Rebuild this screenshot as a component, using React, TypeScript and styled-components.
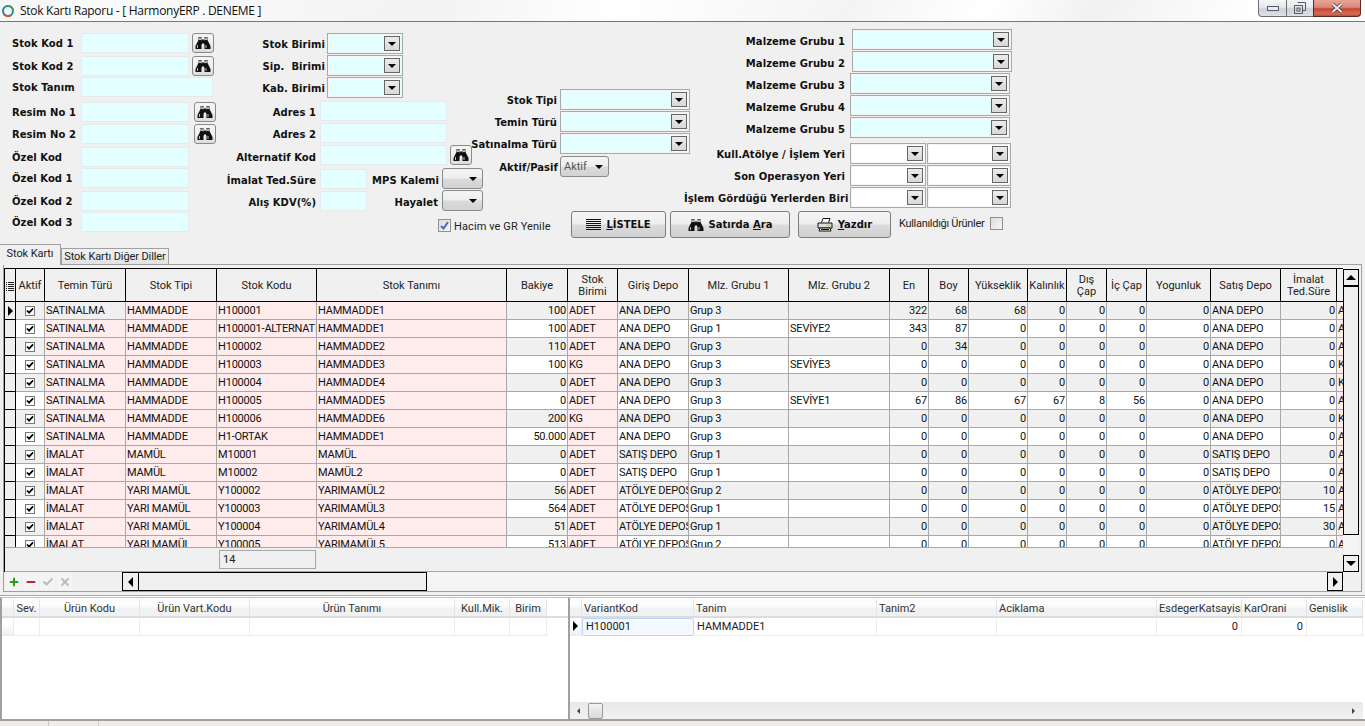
import React from 'react';
import styled, { createGlobalStyle } from 'styled-components';
import { Plus, Minus, Check, X } from 'lucide-react';

const Global = createGlobalStyle`
  html, body { margin: 0; padding: 0; background: #f0f0f0; overflow: hidden; }
  * { box-sizing: border-box; }
  body { font-family: Roboto, "Liberation Sans", sans-serif; font-size: 11px; color: #000; }
`;

const Window = styled.div`
  width: 1365px; height: 726px; display: flex; flex-direction: column; overflow: hidden; background: #f0f0f0;
`;
const TitleBar = styled.header`
  height: 22px; flex: none; display: flex; align-items: flex-start; justify-content: space-between;
  border-bottom: 1px solid #777;
  background: linear-gradient(115deg, #f6f6f6 0%, #fafafa 8%, #f3f3f3 32%, #fff 45%, #f4f4f4 62%, #fff 72%, #f1f1f1 80%, #fff 92%, #fbfbfb 100%);
`;
const TitleLeft = styled.div`
  display: flex; align-items: center; height: 21px; padding-left: 1px; gap: 5px;
  font-family: "Open Sans", "Noto Sans", sans-serif; font-size: 12px; letter-spacing: -0.28px; color: #111;
`;
const WinButtons = styled.div`display: flex; margin-right: 4px;`;
const WinBtn = styled.div<{ $w: number; $close?: boolean; $pos?: string }>`
  width: ${p => p.$w}px; height: 17px; display: flex; align-items: center; justify-content: center;
  border: 1px solid ${p => (p.$close ? '#5a2a26' : '#6b6f76')}; border-top: none; margin-left: -1px;
  border-radius: ${p => p.$pos === 'l' ? '0 0 0 4px' : p.$pos === 'r' ? '0 0 4px 0' : '0'};
  background: ${p => p.$close
    ? 'linear-gradient(#e8a496 0%, #d98a7c 45%, #c8452d 55%, #d96a50 85%, #a8524a 100%)'
    : 'linear-gradient(#f6f6f6 0%, #e6e8ec 45%, #ced1d6 55%, #dfe1e5 100%)'};
`;

const Form = styled.section`
  height: 222px; flex: none; display: flex; padding-left: 12px;
`;
const Column = styled.div<{ $w: number; $top: number }>`
  width: ${p => p.$w}px; padding-top: ${p => p.$top}px; display: flex; flex-direction: column; flex: none;
`;
const Row = styled.div<{ $gap?: number; $h?: number; $pad?: number }>`
  display: flex; align-items: center; white-space: nowrap;
  height: ${p => p.$h ?? 20}px;
  margin-top: ${p => p.$gap ?? 0}px;
  padding-left: ${p => p.$pad ?? 0}px;
`;
const Label = styled.label<{ $w?: number; $right?: boolean; $mr?: number; $ml?: number; $dy?: number }>`
  font: bold 10px "DejaVu Sans", sans-serif; letter-spacing: 0.05px; color: #111;
  display: block; flex: none; white-space: pre;
  width: ${p => (p.$w ? `${p.$w}px` : 'auto')};
  text-align: ${p => (p.$right ? 'right' : 'left')};
  margin-right: ${p => p.$mr ?? 0}px;
  margin-left: ${p => p.$ml ?? 0}px;
  padding-top: ${p => p.$dy ?? 1}px;
`;
const TextBox = styled.div<{ $w: number }>`
  width: ${p => p.$w}px; height: 20px; flex: none; background: #e4ffff;
  border: 1px solid #e6eaea; border-radius: 1px;
`;
const FindBtn = styled.button<{ $ml?: number }>`
  width: 22px; height: 20px; flex: none; padding: 0; margin-left: ${p => p.$ml ?? 3}px;
  display: flex; align-items: center; justify-content: center; color: #111;
  border: 1px solid #8a8a8a; border-radius: 3px;
  background: linear-gradient(#f4f4f4, #f0f0f0 50%, #dcdcdc);
`;
const ComboBox = styled.div<{ $w: number; $plain?: boolean; $ml?: number }>`
  width: ${p => p.$w}px; height: 21px; flex: none; padding: 2px; display: flex; justify-content: flex-end;
  margin-left: ${p => p.$ml ?? 0}px;
  background: ${p => (p.$plain ? '#fff' : '#e4ffff')};
  border: 1px solid #a9a9a9; outline: 1px solid #f4f4f4; outline-offset: -2px;
`;
const DropBtn = styled.div`
  width: 16px; height: 15px; display: flex; align-items: center; justify-content: center;
  border: 1px solid #666; background: linear-gradient(#ececec, #d8d8d8);
`;
const Arrow = styled.i<{ $dir: 'down' | 'up' | 'left' | 'right'; $s?: number; $c?: string }>`
  display: block; width: 0; height: 0; flex: none;
  ${p => {
    const s = p.$s ?? 4; const c = p.$c ?? '#000';
    if (p.$dir === 'down') return `border-left:${s}px solid transparent;border-right:${s}px solid transparent;border-top:${s}px solid ${c};`;
    if (p.$dir === 'up') return `border-left:${s}px solid transparent;border-right:${s}px solid transparent;border-bottom:${s}px solid ${c};`;
    if (p.$dir === 'left') return `border-top:${s}px solid transparent;border-bottom:${s}px solid transparent;border-right:${s}px solid ${c};`;
    return `border-top:${s}px solid transparent;border-bottom:${s}px solid transparent;border-left:${s}px solid ${c};`;
  }}
`;
const FlatSelect = styled.div<{ $w: number; $ml?: number }>`
  width: ${p => p.$w}px; height: 21px; flex: none; display: flex; align-items: center; justify-content: space-between;
  padding: 0 5px 0 3px; margin-left: ${p => p.$ml ?? 0}px; color: #555; font-size: 11px;
  border: 1px solid #8a8a8a; border-radius: 3px;
  background: linear-gradient(#f4f4f4, #efefef 45%, #dadada 55%, #d2d2d2);
`;
const Tick = styled.div<{ $mt?: number; $ml?: number }>`
  width: 13px; height: 13px; flex: none; display: flex; align-items: center; justify-content: center;
  margin-top: ${p => p.$mt ?? 0}px; margin-left: ${p => p.$ml ?? 0}px;
  border: 1px solid #8e8f8f; background: linear-gradient(135deg, #dcdcdc, #f6f6f6);
`;
const SmallText = styled.span<{ $ml?: number; $mt?: number; $tight?: boolean }>`
  font-size: 11px; color: #222; margin-left: ${p => p.$ml ?? 0}px; margin-top: ${p => p.$mt ?? 0}px;
  letter-spacing: ${p => (p.$tight ? '-0.3px' : '0.1px')};
`;
const RightBlock = styled.div`width: 545px; flex: none; display: flex; flex-direction: column;`;
const RightTop = styled.div`display: flex; height: 189px; flex: none;`;
const ButtonRow = styled.div`display: flex; align-items: flex-start; padding-left: 101px;`;
const ActionBtn = styled.button<{ $w: number; $ml?: number }>`
  width: ${p => p.$w}px; height: 27px; flex: none; margin-left: ${p => p.$ml ?? 0}px; padding: 0;
  display: flex; align-items: center; justify-content: center; gap: 5px; color: #111;
  font: bold 10px "DejaVu Sans", sans-serif;
  border: 1px solid #7d7d7d; border-radius: 3px;
  background: linear-gradient(#f5f5f5, #eeeeee 48%, #dcdcdc 52%, #d0d0d0);
  u { text-underline-offset: 1px; }
`;

const TabBar = styled.nav`height: 20px; flex: none; display: flex; align-items: flex-start;`;
const Tab = styled.div<{ $active?: boolean }>`
  height: ${p => (p.$active ? 21 : 16)}px;
  margin-top: ${p => (p.$active ? 0 : 4)}px;
  width: ${p => (p.$active ? 61 : 108)}px;
  display: flex; align-items: center; justify-content: center; flex: none;
  font-size: 11px; letter-spacing: -0.1px; color: #222; position: relative; z-index: ${p => (p.$active ? 2 : 0)};
  border: 1px solid #a0a0a0; border-left: ${p => (p.$active ? 'none' : '1px solid #a0a0a0')};
  border-bottom: none;
  padding-bottom: ${p => (p.$active ? 3 : 0)}px;
  background: ${p => (p.$active ? '#f0f0f0' : 'linear-gradient(#f2f2f2, #e2e2e2)')};
`;
const Frame = styled.section`
  height: 328px; flex: none; margin-left: 3px; width: 1359px; padding-top: 3px;
  border: 1px solid #a0a0a0; display: flex; flex-direction: column;
`;
const FrameTop = styled.div`height: 304px; flex: none; display: flex;`;
const TableArea = styled.div`
  width: 1339px; flex: none; display: flex; flex-direction: column; overflow: hidden;
  border-top: 1px solid #000; border-left: 1px solid #000;
`;
const HeadRow = styled.div`display: flex; height: 33px; flex: none; border-bottom: 1px solid #000; width: 1400px;`;
const HeadCell = styled.div<{ $w: number }>`
  width: ${p => p.$w}px; flex: none; display: flex; align-items: center; justify-content: center;
  text-align: center; line-height: 12px; font-size: 11px; color: #222; overflow: hidden; padding-top: 2px;
  white-space: pre-line;
  border-right: 1px solid #000; background: #f0f0f0;
`;
const Body = styled.div`height: 245px; flex: none; overflow: hidden;`;
const DataRow = styled.div`display: flex; height: 18px; width: 1400px;`;
const Cell = styled.div<{ $w: number; $alt: boolean; $pink?: boolean; $right?: boolean }>`
  width: ${p => p.$w}px; flex: none; height: 18px; line-height: 18px; padding: 0 1px;
  overflow: hidden; white-space: nowrap; font-size: 11px; letter-spacing: -0.2px; color: #111;
  text-align: ${p => (p.$right ? 'right' : 'left')};
  border-right: 1px solid #a8a8a8; border-bottom: 1px solid #a8a8a8;
  background: ${p => (p.$pink ? '#ffecec' : p.$alt ? '#fff' : '#f0f0f0')};
`;
const TickCell = styled(Cell)`
  display: flex; align-items: center; justify-content: center; padding: 0 1px 0 0;
`;
const IndCell = styled.div`
  width: 11px; flex: none; height: 18px; display: flex; align-items: center; justify-content: center;
  background: #f0f0f0; border-right: 1px solid #000; border-bottom: 1px solid #000;
`;
const RowBox = styled.div`
  width: 10px; height: 10px; display: flex; align-items: center; justify-content: center;
  background: #fff; border: 1px solid #777;
`;
const Footer = styled.div`
  height: 25px; flex: none; padding: 2px 0 0 214px; background: #f0f0f0;
  border-top: 1px solid #a8a8a8; border-bottom: 1px solid #a8a8a8;
`;
const CountBox = styled.div`
  width: 97px; height: 19px; border: 1px solid #a8a8a8; padding-left: 3px; line-height: 17px; font-size: 11px; color: #222;
`;
const VScroll = styled.div`
  width: 16px; flex: none; margin-left: 0; display: flex; flex-direction: column; padding-top: 1px;
  background: repeating-conic-gradient(#efefef 0 25%, #fafafa 0 50%) 0 0/2px 2px;
`;
const ScrollBtn = styled.div<{ $w?: number; $h?: number }>`
  width: ${p => (p.$w ? `${p.$w}px` : '100%')}; height: ${p => (p.$h ? `${p.$h}px` : '100%')}; flex: none;
  display: flex; align-items: center; justify-content: center;
  background: #f0f0f0; border: 1px solid #000;
`;
const Spring = styled.div`flex: 1;`;
const Nav = styled.div`height: 19px; flex: none; display: flex; width: 1339px;`;
const NavTools = styled.div`width: 118px; flex: none; display: flex; align-items: center; padding-left: 2px; gap: 2px;`;
const NavBtn = styled.div`
  width: 15px; height: 17px; display: flex; align-items: center; justify-content: center; background: #f4f4f4;
`;
const HScroll = styled.div`
  flex: 1; display: flex;
  background: repeating-conic-gradient(#efefef 0 25%, #fafafa 0 50%) 0 0/2px 2px;
`;
const HThumb = styled.div`width: 289px; flex: none; background: #f0f0f0; border: 1px solid #000; margin-left: -1px;`;
const Gap = styled.div`
  height: 3px; flex: none;
`;
const Split = styled.section`
  height: 126px; flex: none; display: flex; padding-top: 2px;
  border-top: 1px solid #a8a8a8; position: relative;
  border-bottom: 2px solid #a0a0a0; background: #fff;
`;
const SplitTopLine = styled.div`
  position: absolute; left: 0; right: 0; top: 1px; height: 1px; background: #bdbdbd;
`;
const Pane = styled.div<{ $w: number; $b: number }>`
  width: ${p => p.$w}px; flex: none; display: flex; flex-direction: column; background: #fff; padding-top: 1px;
  border-left: ${p => p.$b}px solid #a0a0a0;
`;
const LightHead = styled.div`display: flex; height: 19px; flex: none; border-bottom: 2px solid #dcdcdc;`;
const LightHeadCell = styled.div<{ $w: number; $left?: boolean }>`
  width: ${p => p.$w}px; flex: none; font-size: 11px; line-height: 19px; color: #333; overflow: hidden; white-space: nowrap;
  padding: 0 2px; text-align: ${p => (p.$left ? 'left' : 'center')};
  border-right: 1px solid #e4e4e4;
  background: linear-gradient(#fcfcfc 0 40%, #f0f1f3 60%);
`;
const LightRow = styled.div`display: flex; height: 18px; flex: none;`;
const LightCell = styled.div<{ $w: number; $right?: boolean; $ind?: boolean; $focus?: boolean }>`
  width: ${p => p.$w}px; flex: none; font-size: 11px; line-height: 17px; color: #222; padding: 0 3px 1px;
  overflow: hidden; white-space: nowrap; display: flex; align-items: center;
  justify-content: ${p => (p.$right ? 'flex-end' : p.$ind ? 'center' : 'flex-start')};
  background: ${p => (p.$ind ? 'linear-gradient(#fff 30%, #eef0f2)' : '#fff')};
  border-right: 1px solid #ececec; border-bottom: 1px solid #ececec;
  ${p => (p.$focus ? 'border: 1px solid #bcd7f5; border-radius: 2px; background: #f4f9ff;' : '')}
`;
const PaneScroll = styled.div`
  margin-top: auto; height: 17px; flex: none; display: flex; align-items: center; justify-content: space-between;
  padding: 0 8px 0 7px; background: linear-gradient(#e8e8e8, #f2f2f2);
`;
const PaneScrollLeft = styled.div`display: flex; align-items: center; gap: 8px;`;
const PaneThumb = styled.div`
  width: 15px; height: 16px; border: 1px solid #999; border-radius: 2px;
  background: linear-gradient(#f4f4f4, #d8d8d8);
`;
const StatusBar = styled.footer`height: 8px; flex: 1; display: flex; background: #f1ecec;`;
const StatusPart = styled.div<{ $w: number }>`width: ${p => p.$w}px; flex: none; border-right: 1px solid #cfcaca;`;

const Drop = () => <DropBtn><Arrow $dir="down" /></DropBtn>;
const Binoculars = () => (
  <svg width="16" height="14" viewBox="0 0 16 14">
    <path d="M3.5 1H6.5V4.5H7V3.5H9V4.5H9.5V1H12.5V4L14 7L15.5 10V13H9.5V8.5H9V7.5H7V8.5H6.5V13H.5V10L2 7L3.5 4Z" fill="#111" />
    <path d="M4 2H6V3.5H4ZM10 2H12V3.5H10ZM2.5 9V12M11 9V12" stroke="#e6e6e6" strokeWidth="0.8" fill="none" />
  </svg>
);
const Find = ({ ml }: { ml?: number }) => <FindBtn $ml={ml}><Binoculars /></FindBtn>;
const CheckMark = () => (
  <svg width="8" height="7" viewBox="0 0 9 8"><path d="M1 4 L3.5 6.5 L8 1.5" fill="none" stroke="#000" strokeWidth="2" /></svg>
);
const Logo = () => (
  <svg width="14" height="14" viewBox="0 0 14 14">
    <circle cx="7" cy="7" r="5" fill="none" stroke="#1c8a9a" strokeWidth="2" />
    <path d="M2.5 9.5 A5 5 0 0 0 9.5 11.3" fill="none" stroke="#d6503a" strokeWidth="2" />
    <path d="M7 2 A5 5 0 0 1 12 7" fill="none" stroke="#3aa655" strokeWidth="2" />
  </svg>
);
const ListIcon = () => (
  <svg width="15" height="12" viewBox="0 0 15 12">
    {[0.5, 2.5, 4.5, 6.5, 8.5, 10.5].map(y => <path key={y} d={`M0 ${y} H15`} stroke="#111" strokeWidth="1" />)}
  </svg>
);
const PrintIcon = () => (
  <svg width="16" height="15" viewBox="0 0 16 15">
    <path d="M4.5 5.5 L6 1.5 H13 L11.5 5.5" fill="#fff" stroke="#111" />
    <path d="M1 6 H15 V11 H1 Z" fill="#ddd" stroke="#111" />
    <path d="M9.5 8.5 H13.5" stroke="#e8c81e" strokeWidth="1.4" />
    <path d="M3 11 H13 L14 14 H2 Z" fill="#fff" stroke="#111" />
    <path d="M4 12.5 H12" stroke="#111" />
  </svg>
);
const GridGlyph = () => (
  <svg width="8" height="9" viewBox="0 0 8 9">
    {[0.5, 2.5, 4.5, 6.5, 8.5].map(y => <path key={y} d={`M0 ${y} H1 M2 ${y} H8`} stroke="#222" />)}
  </svg>
);

const colW = [29, 81, 91, 100, 190, 61, 50, 71, 100, 101, 39, 40, 59, 39, 40, 40, 64, 70, 56, 60];
const headers = ['Aktif', 'Temin Türü', 'Stok Tipi', 'Stok Kodu', 'Stok Tanımı', 'Bakiye', 'Stok\nBirimi', 'Giriş Depo', 'Mlz. Grubu 1', 'Mlz. Grubu 2', 'En', 'Boy', 'Yükseklik', 'Kalınlık', 'Dış\nÇap', 'İç Çap', 'Yogunluk', 'Satış Depo', 'İmalat\nTed.Süre', 'Satış'];
const D = 'ATÖLYE DEPOSU';
type R = [string, string, string, string, string, string, string, string, string, number[], string, string, string];
const rows: R[] = [
  ['SATINALMA', 'HAMMADDE', 'H100001', 'HAMMADDE1', '100', 'ADET', 'ANA DEPO', 'Grup 3', '', [322, 68, 68, 0, 0, 0, 0], 'ANA DEPO', '0', 'ADET'],
  ['SATINALMA', 'HAMMADDE', 'H100001-ALTERNATİF', 'HAMMADDE1', '100', 'ADET', 'ANA DEPO', 'Grup 1', 'SEVİYE2', [343, 87, 0, 0, 0, 0, 0], 'ANA DEPO', '0', 'ADET'],
  ['SATINALMA', 'HAMMADDE', 'H100002', 'HAMMADDE2', '110', 'ADET', 'ANA DEPO', 'Grup 3', '', [0, 34, 0, 0, 0, 0, 0], 'ANA DEPO', '0', 'ADET'],
  ['SATINALMA', 'HAMMADDE', 'H100003', 'HAMMADDE3', '100', 'KG', 'ANA DEPO', 'Grup 3', 'SEVİYE3', [0, 0, 0, 0, 0, 0, 0], 'ANA DEPO', '0', 'KG'],
  ['SATINALMA', 'HAMMADDE', 'H100004', 'HAMMADDE4', '0', 'ADET', 'ANA DEPO', 'Grup 3', '', [0, 0, 0, 0, 0, 0, 0], 'ANA DEPO', '0', 'KG'],
  ['SATINALMA', 'HAMMADDE', 'H100005', 'HAMMADDE5', '0', 'ADET', 'ANA DEPO', 'Grup 3', 'SEVİYE1', [67, 86, 67, 67, 8, 56, 0], 'ANA DEPO', '0', 'ADET'],
  ['SATINALMA', 'HAMMADDE', 'H100006', 'HAMMADDE6', '200', 'KG', 'ANA DEPO', 'Grup 3', '', [0, 0, 0, 0, 0, 0, 0], 'ANA DEPO', '0', 'KG'],
  ['SATINALMA', 'HAMMADDE', 'H1-ORTAK', 'HAMMADDE1', '50.000', 'ADET', 'ANA DEPO', 'Grup 3', '', [0, 0, 0, 0, 0, 0, 0], 'ANA DEPO', '0', 'ADET'],
  ['İMALAT', 'MAMÜL', 'M10001', 'MAMÜL', '0', 'ADET', 'SATIŞ DEPO', 'Grup 1', '', [0, 0, 0, 0, 0, 0, 0], 'SATIŞ DEPO', '0', 'ADET'],
  ['İMALAT', 'MAMÜL', 'M10002', 'MAMÜL2', '0', 'ADET', 'SATIŞ DEPO', 'Grup 1', '', [0, 0, 0, 0, 0, 0, 0], 'SATIŞ DEPO', '0', 'ADET'],
  ['İMALAT', 'YARI MAMÜL', 'Y100002', 'YARIMAMÜL2', '56', 'ADET', D, 'Grup 2', '', [0, 0, 0, 0, 0, 0, 0], D, '10', 'ADET'],
  ['İMALAT', 'YARI MAMÜL', 'Y100003', 'YARIMAMÜL3', '564', 'ADET', D, 'Grup 1', '', [0, 0, 0, 0, 0, 0, 0], D, '15', 'ADET'],
  ['İMALAT', 'YARI MAMÜL', 'Y100004', 'YARIMAMÜL4', '51', 'ADET', D, 'Grup 1', '', [0, 0, 0, 0, 0, 0, 0], D, '30', 'ADET'],
  ['İMALAT', 'YARI MAMÜL', 'Y100005', 'YARIMAMÜL5', '513', 'ADET', D, 'Grup 2', '', [0, 0, 0, 0, 0, 0, 0], D, '0', 'ADET'],
];

const leftCols: [string, number][] = [['', 12], ['Sev.', 26], ['Ürün Kodu', 100], ['Ürün Vart.Kodu', 110], ['Ürün Tanımı', 205], ['Kull.Mik.', 55], ['Birim', 37]];
const rightCols: [string, number][] = [['', 12], ['VariantKod', 112], ['Tanim', 183], ['Tanim2', 120], ['Aciklama', 160], ['EsdegerKatsayisi', 85], ['KarOrani', 65], ['Genislik', 56]];

const col1: [string, number, number, boolean][] = [
  ['Stok Kod 1', 0, 108, true], ['Stok Kod 2', 3, 108, true], ['Stok Tanım', 1, 132, false],
];
const col1b: [string, number, boolean][] = [
  ['Resim No 1', 5, true], ['Resim No 2', 2, true], ['Özel Kod', 3, false], ['Özel Kod 1', 1, false], ['Özel Kod 2', 3, false], ['Özel Kod 3', 1, false],
];

export default function App() {
  return (
    <Window>
      <Global />
      <TitleBar>
        <TitleLeft><Logo />Stok Kartı Raporu - [ HarmonyERP . DENEME ]</TitleLeft>
        <WinButtons>
          <WinBtn $w={29} $pos="l">
            <svg width="12" height="5" viewBox="0 0 12 5"><rect x="0.5" y="0.5" width="11" height="4" fill="#e8eaf0" stroke="#555b66" /></svg>
          </WinBtn>
          <WinBtn $w={28}>
            <svg width="12" height="12" viewBox="0 0 12 12"><path d="M3.5 .5 H11.5 V8.5 H9 M.5 3.5 H8.5 V11.5 H.5 Z" fill="none" stroke="#555b66" /><rect x="3" y="6" width="3" height="3" fill="none" stroke="#555b66" /></svg>
          </WinBtn>
          <WinBtn $w={48} $close $pos="r">
            <svg width="12" height="10" viewBox="0 0 12 10"><path d="M1.5 1 L10.5 9 M10.5 1 L1.5 9" stroke="#3a3a44" strokeWidth="3.4" /><path d="M1.5 1 L10.5 9 M10.5 1 L1.5 9" stroke="#f2f2f2" strokeWidth="1.8" /></svg>
          </WinBtn>
        </WinButtons>
      </TitleBar>

      <Form>
        <Column $w={213} $top={11}>
          {col1.map(([t, g, w, f]) => (
            <Row key={t} $gap={g}><Label $w={69}>{t}</Label><TextBox $w={w} />{f && <Find />}</Row>
          ))}
          {col1b.map(([t, g, f]) => (
            <Row key={t} $gap={g}><Label $w={69}>{t}</Label><TextBox $w={108} />{f && <Find ml={5} />}</Row>
          ))}
        </Column>
        <Column $w={245} $top={11}>
          {['Stok Birimi', 'Sip.  Birimi', 'Kab. Birimi'].map((t, i) => (
            <Row key={t} $h={21} $gap={i ? 1 : 0}>
              <Label $w={100} $right $mr={2}>{t}</Label>
              <ComboBox $w={76}><Drop /></ComboBox>
            </Row>
          ))}
          <Row $gap={3}><Label $w={91} $right $mr={4} $dy={3}>Adres 1</Label><TextBox $w={127} /></Row>
          <Row $gap={2}><Label $w={91} $right $mr={4} $dy={2}>Adres 2</Label><TextBox $w={127} /></Row>
          <Row $gap={2}><Label $w={91} $right $mr={4} $dy={4}>Alternatif Kod</Label><TextBox $w={127} /><Find /></Row>
          <Row $gap={3} $h={21}>
            <Label $w={91} $right $mr={4} $dy={3}>İmalat Ted.Süre</Label><TextBox $w={47} />
            <Label $ml={5} $dy={3}>MPS Kalemi</Label>
            <FlatSelect $w={41} $ml={3}><span /><Arrow $dir="down" /></FlatSelect>
          </Row>
          <Row $gap={1} $h={21}>
            <Label $w={91} $right $mr={4} $dy={4}>Alış KDV(%)</Label><TextBox $w={47} />
            <Label $w={71} $right $dy={4}>Hayalet</Label>
            <FlatSelect $w={41} $ml={4}><span /><Arrow $dir="down" /></FlatSelect>
          </Row>
          <Row $gap={8} $h={13} $pad={213}>
            <Tick><svg width="9" height="9" viewBox="0 0 9 9"><path d="M1 5 L3.5 7.5 L8 1" fill="none" stroke="#3b6fb5" strokeWidth="2" /></svg></Tick>
            <SmallText $ml={3} $mt={2}>Hacim ve GR Yenile</SmallText>
          </Row>
        </Column>
        <RightBlock>
          <RightTop>
            <Column $w={214} $top={67}>
              {['Stok Tipi', 'Temin Türü', 'Satınalma Türü'].map((t, i) => (
                <Row key={t} $h={21} $gap={i ? 1 : 0}>
                  <Label $w={87} $right $mr={3} $dy={i ? 1 : 2}>{t}</Label>
                  <ComboBox $w={130}><Drop /></ComboBox>
                </Row>
              ))}
              <Row $h={21} $gap={2}>
                <Label $w={88} $right $mr={2} $dy={2}>Aktif/Pasif</Label>
                <FlatSelect $w={49}>Aktif<Arrow $dir="down" /></FlatSelect>
              </Row>
            </Column>
            <Column $w={331} $top={7}>
              {[1, 2, 3, 4, 5].map(n => (
                <Row key={n} $h={21} $gap={n > 1 ? 1 : 0}>
                  <Label $w={161} $right $mr={1} $dy={n < 3 ? 3 : 4}>{`Malzeme Grubu ${n}`}</Label>
                  <ComboBox $w={160} $ml={n < 3 ? 6 : 4}><Drop /></ComboBox>
                </Row>
              ))}
              {['Kull.Atölye / İşlem Yeri', 'Son Operasyon Yeri', 'İşlem Gördüğü Yerlerden Biri'].map((t, i) => (
                <Row key={t} $h={21} $gap={i ? 1 : 5}>
                  <Label $w={161} $right $mr={1} $dy={2}>{t}</Label>
                  <ComboBox $w={76} $ml={4} $plain><Drop /></ComboBox>
                  <ComboBox $w={84} $ml={1} $plain><Drop /></ComboBox>
                </Row>
              ))}
            </Column>
          </RightTop>
          <ButtonRow>
            <ActionBtn $w={95}><ListIcon /><span><u>L</u>İSTELE</span></ActionBtn>
            <ActionBtn $w={120} $ml={4}><Binoculars /><span>Satırda <u>A</u>ra</span></ActionBtn>
            <ActionBtn $w={93} $ml={8}><PrintIcon /><span><u>Y</u>azdır</span></ActionBtn>
            <SmallText $ml={8} $mt={6} $tight>Kullanıldığı Ürünler</SmallText>
            <Tick $ml={6} $mt={6} />
          </ButtonRow>
        </RightBlock>
      </Form>

      <TabBar>
        <Tab $active>Stok Kartı</Tab>
        <Tab>Stok Kartı Diğer Diller</Tab>
      </TabBar>
      <Frame>
        <FrameTop>
          <TableArea>
            <HeadRow>
              <HeadCell $w={11}><GridGlyph /></HeadCell>
              {headers.map((h, i) => (
                <HeadCell key={h} $w={colW[i]}>{h}</HeadCell>
              ))}
            </HeadRow>
            <Body>
              {rows.map((r, i) => {
                const alt = i % 2 === 1;
                const vals: [string, boolean, boolean][] = [
                  [r[0], i > 0, false], [r[1], true, false], [r[2], true, false], [r[3], true, false],
                  [r[4], false, true], [r[5], true, false], [r[6], false, false], [r[7], false, false], [r[8], false, false],
                  ...r[9].map(v => [String(v), false, true] as [string, boolean, boolean]),
                  [r[10], false, false], [r[11], false, true], [r[12], true, false],
                ];
                return (
                  <DataRow key={r[2]}>
                    <IndCell>{i === 0 && <Arrow $dir="right" $s={5} />}</IndCell>
                    <TickCell $w={colW[0]} $alt={alt}><RowBox><CheckMark /></RowBox></TickCell>
                    {vals.map(([v, pink, right], j) => (
                      <Cell key={j} $w={colW[j + 1]} $alt={alt} $pink={pink} $right={right}>{v}</Cell>
                    ))}
                  </DataRow>
                );
              })}
            </Body>
            <Footer><CountBox>14</CountBox></Footer>
          </TableArea>
          <VScroll>
            <ScrollBtn $h={17}><Arrow $dir="up" $s={5} /></ScrollBtn>
            <ScrollBtn $h={249} />
            <Spring />
            <ScrollBtn $h={17}><Arrow $dir="down" $s={5} /></ScrollBtn>
          </VScroll>
        </FrameTop>
        <Nav>
          <NavTools>
            <NavBtn><Plus size={12} strokeWidth={4} color="#2f9a12" /></NavBtn>
            <NavBtn><Minus size={12} strokeWidth={4} color="#c8202a" /></NavBtn>
            <NavBtn><Check size={12} strokeWidth={4} color="#bdbdbd" /></NavBtn>
            <NavBtn><X size={12} strokeWidth={4} color="#bdbdbd" /></NavBtn>
          </NavTools>
          <HScroll>
            <ScrollBtn $w={17}><Arrow $dir="left" $s={5} /></ScrollBtn>
            <HThumb />
            <Spring />
            <ScrollBtn $w={16}><Arrow $dir="right" $s={5} /></ScrollBtn>
          </HScroll>
        </Nav>
      </Frame>
      <Gap />
      <Split>
        <SplitTopLine />
        <Pane $w={568} $b={2}>
          <LightHead>
            {leftCols.map(([t, w], i) => <LightHeadCell key={i} $w={w}>{t}</LightHeadCell>)}
          </LightHead>
          <LightRow>
            {leftCols.map(([t, w], i) => <LightCell key={i} $w={w} $ind={i === 0} />)}
          </LightRow>
        </Pane>
        <Pane $w={795} $b={2}>
          <LightHead>
            {rightCols.map(([t, w], i) => <LightHeadCell key={i} $w={w} $left>{t}</LightHeadCell>)}
          </LightHead>
          <LightRow>
            <LightCell $w={12} $ind><Arrow $dir="right" $s={5} /></LightCell>
            <LightCell $w={112} $focus>H100001</LightCell>
            <LightCell $w={183}>HAMMADDE1</LightCell>
            <LightCell $w={120} />
            <LightCell $w={160} />
            <LightCell $w={85} $right>0</LightCell>
            <LightCell $w={65} $right>0</LightCell>
            <LightCell $w={56} />
          </LightRow>
          <PaneScroll>
            <PaneScrollLeft><Arrow $dir="left" $s={3} $c="#444" /><PaneThumb /></PaneScrollLeft>
            <Arrow $dir="right" $s={3} $c="#444" />
          </PaneScroll>
        </Pane>
      </Split>
      <StatusBar><StatusPart $w={49} /><StatusPart $w={50} /></StatusBar>
    </Window>
  );
}
